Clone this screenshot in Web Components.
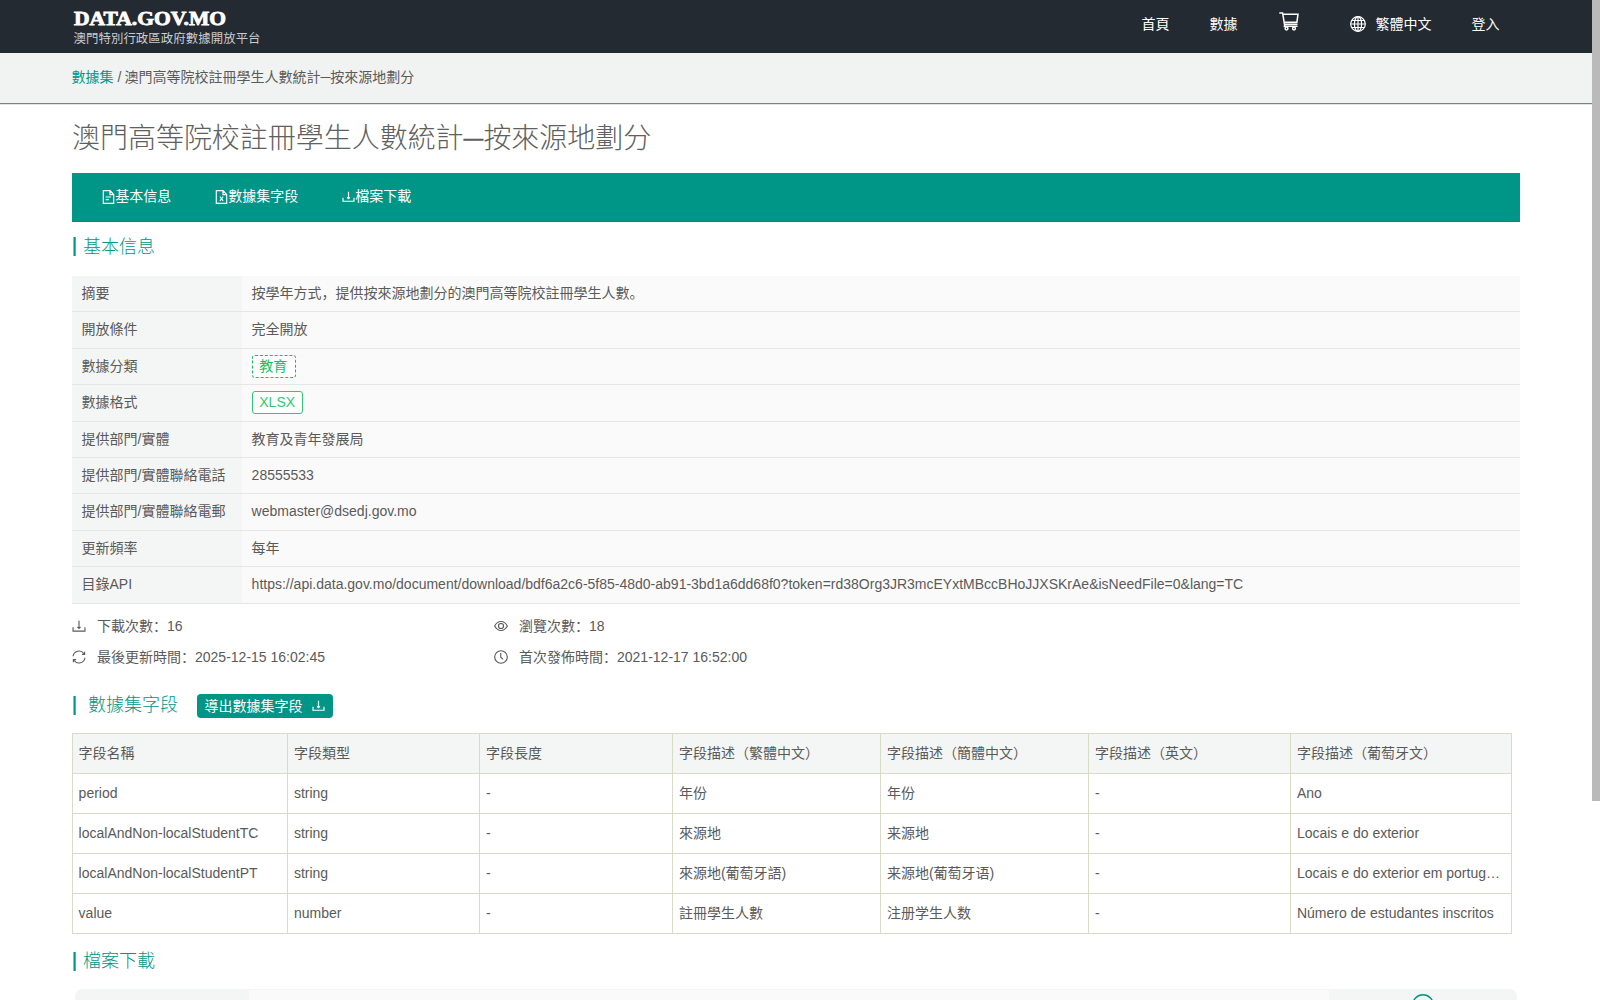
<!DOCTYPE html>
<html lang="zh">
<head>
<meta charset="utf-8">
<title>澳門高等院校註冊學生人數統計</title>
<style>
html,body{margin:0;padding:0;height:1000px;overflow:hidden;background:#fff}
body{font:14px/20px "Liberation Sans","Noto Sans CJK SC",sans-serif;font-weight:400;color:#5a5a5a}
</style>
</head>
<body>
<data-page></data-page>
<script>
const define = (name, css, html) => customElements.define(name, class extends HTMLElement {
  connectedCallback() {
    if (this.shadowRoot) return;
    const root = this.attachShadow({mode: 'open'});
    root.innerHTML = `<style>*{box-sizing:border-box}:host{display:block;box-sizing:border-box}${css}</style>` +
      (typeof html === 'function' ? html(this) : html);
  }
});

const icons = {
  download: '<path d="M1.200 9.500v4.300h13.600V9.500"/><path d="M8 2v8.500M6.200 9 8 10.800 9.800 9"/>',
  doc: '<path d="M1.600.8h8.400l4.400 4.400v10H1.600zM9.800.8v4.600h4.600M4.500 8h6.500M4.500 11h4"/>',
  sheet: '<path d="M1.600.8h8.400l4.400 4.400v10H1.600zM9.800.8v4.600h4.600M6 7.500l4 5M10 7.500l-4 5"/>',
  refresh: '<path d="M1.200 7.2A6.900 6.900 0 0 1 13.600 4M14.800 8.800A6.900 6.900 0 0 1 2.400 12M14.400 2v3h-3M1.600 14v-3h3"/>',
  eye: '<path d="M.7 8C4.500 1.200 11.500 1.200 15.300 8 11.500 14.800 4.500 14.800 .7 8z"/><circle cx="8" cy="8" r="2.900"/>',
  clock: '<circle cx="8" cy="8" r="7.2"/><path d="M7.700 3.500v4.700l2.800 2.500"/>',
  globe: '<circle cx="8" cy="8" r="7.300"/><ellipse cx="8" cy="8" rx="3.600" ry="7.300"/><path d="M8 .7v14.600M.7 8h14.600M1.700 4.500h12.600M1.700 11.500h12.600"/>',
  cart: '<path d="M.3 1h3.300L5.500 12.200H18.500M4 2.200H19L17.900 10.200H5.200M6 12.200l-.6 2H18.500"/><circle cx="7.500" cy="16.500" r="1.400"/><circle cx="15" cy="16.500" r="1.400"/>'
};
define('ui-icon', ':host{display:inline-block;flex:none}svg{display:block;fill:none;stroke:currentColor}',
  el => {
    const w = el.getAttribute('w') || 14, h = el.getAttribute('h') || w, n = el.getAttribute('name');
    return `<svg width="${w}" height="${h}" viewBox="${n === 'cart' ? '0 0 20 19' : '0 0 16 16'}" preserveAspectRatio="none" stroke-width="${el.getAttribute('sw') || 1.2}">${icons[n]}</svg>`;
  });

define('site-brand', ':host{width:190px;padding-top:9px}svg{display:block}',
  `<svg width="190" height="38"><text x="2" y="15.500" font-family="Liberation Serif" font-weight="700" font-size="19" fill="#fff" stroke="#fff" stroke-width=".8" textLength="152" lengthAdjust="spacingAndGlyphs">DATA.GOV.MO</text>
  <text x="1.500" y="33.500" font-family="Noto Sans CJK TC" font-size="12.4" fill="#c9cccf" textLength="187">澳門特別行政區政府數據開放平台</text></svg>`);

define('site-header', `:host{display:flex;justify-content:space-between;height:53px;background:#242a32;color:#fff;padding:0 92.500px 0 72px}
  nav{display:flex;align-items:flex-start;height:53px}
  span{line-height:20px;margin-top:14px}
  .a{margin-right:40px}.b{margin-right:41px}.c{margin:12px 51px 0 0}.g{margin:16px 10px 0 0}.l{margin-right:40px}`,
  `<site-brand></site-brand><nav><span class="a">首頁</span><span class="b">數據</span><ui-icon class="c" name="cart" w="20" h="19" sw="1.500"></ui-icon><ui-icon class="g" name="globe" w="16" sw="1.200"></ui-icon><span class="l">繁體中文</span><span>登入</span></nav>`);

define('crumb-bar', `:host{height:51px;padding:14px 72px 0 71.500px;background:#f1f3f2;border-bottom:1px solid #808080;box-shadow:0 1px 0 #e4e4e4;line-height:20px}
  b{font-weight:inherit;color:#009687}i{font-style:normal;margin:0 3px 0 4px}`, `<b>數據集</b><i>/</i><slot></slot>`);

define('page-title', ':host{height:69px;padding:15px 0 0;font-size:28px;line-height:40px;color:#606060;font-weight:300;letter-spacing:-.03px}', '<slot></slot>');

define('tab-item', ':host{display:flex;align-items:center}ui-icon{margin-top:1px}', el => `<ui-icon name="${el.getAttribute('icon')}" w="13" h="${el.getAttribute('icon') === 'download' ? 13 : 14}" sw="1.400"></ui-icon><slot></slot>`);
define('tab-nav', ':host{display:flex;gap:44px;height:49px;padding:0 0 2px 30.300px;background:#009687;border-bottom:1px solid #078a7d;color:#fff}',
  `<tab-item icon="doc">基本信息</tab-item><tab-item icon="sheet">數據集字段</tab-item><tab-item icon="download">檔案下載</tab-item>`);

define('section-heading', `:host{display:flex;align-items:flex-start;color:#009687;font-size:18px;line-height:26px;padding-left:1px;font-weight:300}
  i{width:3px;height:19px;margin-top:var(--bar,4px);background:linear-gradient(90deg,#7fcac3 1px,#009687 1px 2px,#4db5ab 2px)}
  span{margin-left:var(--gap,7px)}`,
  `<i></i><span><slot></slot></span><slot name="action"></slot>`);

define('data-tag', ':host{display:block;width:44px;height:23px;margin-top:-1px;line-height:20px;padding:0 0 0 6.700px;border:1px solid #13bf5c;border-radius:3px;color:#13bf5c;background:#fff}:host([dashed]){border-style:dashed}:host(:not([dashed])){width:51px;color:#2ec971;border-color:#2ec971}', '<slot></slot>');

define('info-row', `:host{display:flex;height:36.4px;border-bottom:1px solid #e6e6e6;background:#fafafa;line-height:20px}
  .k{width:170px;background:#f4f6f5;padding:7px 0 0 9.500px;white-space:nowrap}.v{padding:7px 0 0 9.600px;white-space:nowrap}`,
  el => `<div class="k">${el.getAttribute('label')}</div><div class="v"><slot></slot></div>`);

define('stat-item', ':host{display:flex;align-items:center;width:422px;height:31px}span{margin-left:11px}', el => `<ui-icon name="${el.getAttribute('icon')}" w="14" h="14" sw="1.300"></ui-icon><span><slot></slot></span>`);

define('export-button', ':host{display:flex;align-items:center;gap:9px;width:136px;height:24px;margin:2px 0 0 19px;padding:0 0 0 7.500px;background:#009687;color:#fff;font-size:14px;line-height:20px;font-weight:400;border-radius:4px}', '<slot></slot><ui-icon name="download" w="13" h="13" sw="1.400"></ui-icon>');

const heads = ['字段名稱','字段類型','字段長度','字段描述（繁體中文）','字段描述（簡體中文）','字段描述（英文）','字段描述（葡萄牙文）'];
const rows = [
  ['period','string','-','年份','年份','-','Ano'],
  ['localAndNon-localStudentTC','string','-','來源地','来源地','-','Locais e do exterior'],
  ['localAndNon-localStudentPT','string','-','來源地(葡萄牙語)','来源地(葡萄牙语)','-','Locais e do exterior em português'],
  ['value','number','-','註冊學生人數','注册学生人数','-','Número de estudantes inscritos']
];
define('field-table', `:host{display:grid;grid-template-columns:216px 192px 193px 208px 208px 202px 221px;grid-auto-rows:40px;width:1440px;border-top:1px solid #d9dac8}
  div{border-right:1px solid #d9dac8;border-bottom:1px solid #d9dac8;line-height:20px;padding:9px 10px 0 5.900px;overflow:hidden;white-space:nowrap;text-overflow:ellipsis}
  div:nth-of-type(7n+1){border-left:1px solid #d9dac8;padding-left:5.600px}.h{background:#f4f6f5}`,
  () => [heads, ...rows].map((r, n) => r.map(c => `<div class="${n ? 'd' : 'h'}">${c}</div>`).join('')).join(''));

define('file-card', `:host{display:flex;height:60px;margin:0 3px;background:#fafafa;border-top:1px solid #f4f6f5;border-radius:7px 7px 0 0;overflow:hidden;justify-content:space-between}
  .k{width:174px;background:#f4f6f5}.a{width:188px;background:#f4f6f5;display:flex;justify-content:center;padding-top:4px}svg{display:block}`,
  `<div class="k"></div><div class="a"><svg width="22" height="22" viewBox="0 0 22 22"><circle cx="11" cy="11" r="10.200" fill="none" stroke="#009687" stroke-width="1.500"/></svg></div>`);

define('page-scrollbar', ':host{width:8px;flex:none;background:#fff}i{display:block;height:801px;background:#bababa}', '<i></i>');

define('data-page', `:host{display:flex;height:1000px;overflow:hidden}
  .col{width:1592px;flex:none}main{padding:0 72px}
  .basic{--bar:3px;padding-top:12px;height:54px}.stats{display:flex;flex-wrap:wrap;align-content:flex-start;width:900px;padding-top:7px;height:88px}
  .fields{--gap:12px;height:41px}.files{padding-top:14px;height:55px}`,
  `<div class="col"><site-header></site-header>
  <crumb-bar>澳門高等院校註冊學生人數統計─按來源地劃分</crumb-bar>
  <main><page-title>澳門高等院校註冊學生人數統計─按來源地劃分</page-title>
  <tab-nav></tab-nav>
  <section-heading class="basic">基本信息</section-heading>
  <info-row label="摘要">按學年方式，提供按來源地劃分的澳門高等院校註冊學生人數。</info-row>
  <info-row label="開放條件">完全開放</info-row>
  <info-row label="數據分類"><data-tag dashed>教育</data-tag></info-row>
  <info-row label="數據格式"><data-tag>XLSX</data-tag></info-row>
  <info-row label="提供部門/實體">教育及青年發展局</info-row>
  <info-row label="提供部門/實體聯絡電話">28555533</info-row>
  <info-row label="提供部門/實體聯絡電郵">webmaster@dsedj.gov.mo</info-row>
  <info-row label="更新頻率">每年</info-row>
  <info-row label="目錄API">https://api.data.gov.mo/document/download/bdf6a2c6-5f85-48d0-ab91-3bd1a6dd68f0?token=rd38Org3JR3mcEYxtMBccBHoJJXSKrAe&amp;isNeedFile=0&amp;lang=TC</info-row>
  <div class="stats"><stat-item icon="download">下載次數：16</stat-item><stat-item icon="eye">瀏覽次數：18</stat-item><stat-item icon="refresh">最後更新時間：2025-12-15 16:02:45</stat-item><stat-item icon="clock">首次發佈時間：2021-12-17 16:52:00</stat-item></div>
  <section-heading class="fields">數據集字段<export-button slot="action">導出數據集字段</export-button></section-heading>
  <field-table></field-table>
  <section-heading class="files">檔案下載</section-heading>
  <file-card></file-card></main></div>
  <page-scrollbar></page-scrollbar>`);
</script>
</body>
</html>
